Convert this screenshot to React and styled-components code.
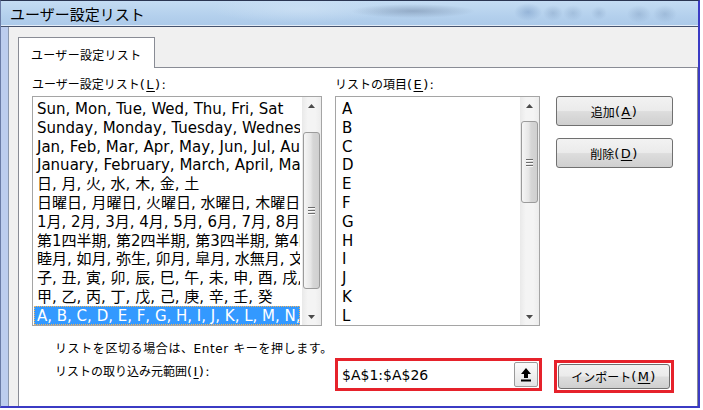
import React from 'react';
import styled, { createGlobalStyle } from 'styled-components';

const Global = createGlobalStyle`
  html, body { margin: 0; padding: 0; background: #fff; }
  body { width: 703px; height: 410px; overflow: hidden; }
`;

const UI = `"DejaVu Sans", "Noto Sans CJK JP", sans-serif`;

const Window = styled.div`
  width: 700px;
  height: 408px;
  box-sizing: border-box;
  border-top: 1px solid #2a3552;
  border-left: 1px solid #6a7ca6;
  border-right: 2px solid #3b3bc4;
  border-bottom: 2px solid #3b3bc4;
  background: #bccdee;
  display: flex;
  flex-direction: column;
  font-family: ${UI};
  color: #000;
`;

const TitleBar = styled.div`
  height: 26px;
  border-bottom: 1px solid #46536e;
  box-shadow: inset 0 -1px 0 #e2ecf8;
  display: flex;
  align-items: center;
  padding: 0 0 1px 9px;
  box-sizing: border-box;
  font-family: "Noto Sans CJK JP", sans-serif;
  font-size: 15px;
  background:
    radial-gradient(ellipse 62px 7px at 412px 10px, rgba(95,115,145,0.42), transparent 100%),
    radial-gradient(ellipse 14px 9px at 527px 11px, rgba(70,110,165,0.30), transparent 100%),
    radial-gradient(ellipse 10px 8px at 552px 12px, rgba(90,120,160,0.25), transparent 100%),
    radial-gradient(ellipse 10px 8px at 572px 12px, rgba(90,120,160,0.22), transparent 100%),
    radial-gradient(ellipse 8px 7px at 598px 12px, rgba(90,120,160,0.22), transparent 100%),
    radial-gradient(ellipse 12px 9px at 638px 13px, rgba(90,120,160,0.25), transparent 100%),
    radial-gradient(ellipse 12px 9px at 664px 13px, rgba(90,120,160,0.25), transparent 100%),
    radial-gradient(ellipse 90px 14px at 300px 8px, rgba(210,228,246,0.6), transparent 100%),
    linear-gradient(#c4dcf3, #b5d1ed 55%, #abc9e9);
`;

const Body = styled.div`
  flex: 1;
  margin-left: 7px;
  border-left: 1px solid #8a97ad;
  background: #f0f0f0;
  padding: 10px 0 0 9px;
  display: flex;
  flex-direction: column;
  min-height: 0;
`;

const TabStrip = styled.div`
  display: flex;
`;

const Tab = styled.div`
  position: relative;
  z-index: 1;
  width: 137px;
  height: 31px;
  box-sizing: border-box;
  border: 1px solid #898c95;
  border-bottom: none;
  background: #fff;
  margin-bottom: -1px;
  display: flex;
  align-items: center;
  padding: 3px 0 0 12px;
  font-size: 12px;
  letter-spacing: 0.3px;
`;

const Panel = styled.div`
  flex: 1;
  background: #fff;
  border: 1px solid #898c95;
  border-bottom: none;
  padding: 9px 0 0 13px;
  min-height: 0;
`;

const TopGrid = styled.div`
  display: grid;
  grid-template-columns: 290px 205px 117px;
  grid-template-rows: 16px 230px;
  column-gap: 13px;
  row-gap: 3px;
`;

const Label = styled.div`
  font-size: 12px;
  line-height: 16px;
  white-space: nowrap;
  padding-left: ${p => p.$indent || 0}px;
  margin-top: ${p => p.$top || 0}px;
`;

const Mn = styled.span`
  font-size: 13px;
  letter-spacing: 1.4px;
`;

const Key = styled.span`
  text-decoration: underline;
  text-underline-offset: 2px;
`;

const ListBox = styled.div`
  height: 230px;
  box-sizing: border-box;
  border: 1px solid #a5a5a5;
  background: #fff;
  display: flex;
  overflow: hidden;
`;

const Items = styled.div`
  flex: 1;
  min-width: 0;
  padding: 2px 2px 0 1px;
  overflow: hidden;
`;

const Item = styled.div`
  height: 18.8px;
  box-sizing: border-box;
  padding-top: 3px;
  line-height: 15.8px;
  font-size: 15px;
  padding-left: ${p => p.$pad}px;
  white-space: nowrap;
  overflow: hidden;
  background: ${p => (p.$selected ? '#3399ff' : 'transparent')};
  color: ${p => (p.$selected ? '#fff' : '#000')};
  outline: ${p => (p.$selected ? '1px dotted #f3b35a' : 'none')};
  outline-offset: -1px;
`;

const ScrollBar = styled.div`
  width: 19px;
  flex: none;
  background: linear-gradient(to right, #e9e9e9, #f4f4f4 30%, #f4f4f4 70%, #ececec);
  display: flex;
  flex-direction: column;
`;

const Arrow = styled.div`
  height: 17px;
  flex: none;
  display: flex;
  align-items: center;
  justify-content: center;
`;

const Track = styled.div`
  flex: 1;
  padding: 0 1px;
`;

const Thumb = styled.div`
  margin-top: ${p => p.$top}px;
  height: ${p => p.$h}px;
  box-sizing: border-box;
  border: 1px solid #9b9b9b;
  border-radius: 3px;
  background: linear-gradient(to right, #f6f6f6, #e6e6e6 45%, #d6d6d6 60%, #cfcfcf);
  display: flex;
  flex-direction: column;
  align-items: center;
  justify-content: center;
  gap: 2px;
`;

const Grip = styled.div`
  width: 7px;
  height: 1px;
  background: #6d6d6d;
  box-shadow: 0 1px 0 #fafafa;
`;

const ButtonCol = styled.div`
  margin-left: 3px;
  display: flex;
  flex-direction: column;
  gap: 12px;
`;

const Button = styled.button`
  width: ${p => p.$w || 117}px;
  height: ${p => p.$h || 30}px;
  box-sizing: border-box;
  border: 1px solid #707070;
  border-radius: 3px;
  background: linear-gradient(#f2f2f2, #ebebeb 48%, #dddddd 52%, #cfcfcf);
  font-family: ${UI};
  font-size: 12px;
  color: #000;
  padding: 0;
  display: flex;
  align-items: center;
  justify-content: center;
`;

const Info = styled.div`
  margin-top: 15px;
  padding-left: 23px;
  font-size: 12px;
  letter-spacing: 0.6px;
  line-height: 16px;
  white-space: nowrap;
`;

const RangeRow = styled.div`
  margin-top: 1px;
  display: grid;
  grid-template-columns: 290px 205px 117px;
  column-gap: 13px;
  align-items: start;
`;

const RedInput = styled.div`
  width: 207px;
  height: 33px;
  box-sizing: border-box;
  border: 3px solid #e6222b;
  background: #fff;
  display: flex;
  align-items: center;
  padding: 0 1px 0 4px;
`;

const RangeText = styled.div`
  flex: 1;
  font-size: 14px;
  white-space: nowrap;
`;

const Collapse = styled.div`
  width: 24px;
  height: 25px;
  box-sizing: border-box;
  border: 1px solid #9a9a9a;
  border-radius: 2px;
  background: linear-gradient(#fcfcfc, #f0f0f0 50%, #e4e4e4);
  display: flex;
  align-items: center;
  justify-content: center;
`;

const RedButtonBox = styled.div`
  margin-left: 1px;
  margin-top: 2px;
  width: 120px;
  height: 33px;
  box-sizing: border-box;
  border: 3px solid #e6222b;
  padding: 1px;
  background: #fff;
`;

const UpTri = () => (
  <svg width="7" height="4" viewBox="0 0 7 4"><polygon points="0,4 3.5,0 7,4" fill="#4a4a4a" /></svg>
);
const DownTri = () => (
  <svg width="7" height="4" viewBox="0 0 7 4"><polygon points="0,0 3.5,4 7,0" fill="#4a4a4a" /></svg>
);

const Scroll = ({ top, h }) => (
  <ScrollBar>
    <Arrow><UpTri /></Arrow>
    <Track>
      <Thumb $top={top} $h={h}>
        <Grip /><Grip /><Grip />
      </Thumb>
    </Track>
    <Arrow><DownTri /></Arrow>
  </ScrollBar>
);

const userLists = [
  'Sun, Mon, Tue, Wed, Thu, Fri, Sat',
  'Sunday, Monday, Tuesday, Wednesday, Thursday, Friday, Saturday',
  'Jan, Feb, Mar, Apr, May, Jun, Jul, Aug, Sep, Oct, Nov, Dec',
  'January, February, March, April, May, June, July, August',
  '日, 月, 火, 水, 木, 金, 土',
  '日曜日, 月曜日, 火曜日, 水曜日, 木曜日, 金曜日, 土曜日',
  '1月, 2月, 3月, 4月, 5月, 6月, 7月, 8月, 9月, 10月',
  '第1四半期, 第2四半期, 第3四半期, 第4四半期',
  '睦月, 如月, 弥生, 卯月, 皐月, 水無月, 文月, 葉月',
  '子, 丑, 寅, 卯, 辰, 巳, 午, 未, 申, 酉, 戌, 亥',
  '甲, 乙, 丙, 丁, 戊, 己, 庚, 辛, 壬, 癸',
  'A, B, C, D, E, F, G, H, I, J, K, L, M, N, O, P',
];

const entries = ['A', 'B', 'C', 'D', 'E', 'F', 'G', 'H', 'I', 'J', 'K', 'L'];

export default function App() {
  return (
    <>
      <Global />
      <Window>
        <TitleBar>ユーザー設定リスト</TitleBar>
        <Body>
          <TabStrip>
            <Tab>ユーザー設定リスト</Tab>
          </TabStrip>
          <Panel>
            <TopGrid>
              <Label>ユーザー設定リスト<Mn>(<Key>L</Key>):</Mn></Label>
              <Label>リストの項目<Mn>(<Key>E</Key>):</Mn></Label>
              <div />
              <ListBox>
                <Items>
                  {userLists.map((t, i) => (
                    <Item key={i} $pad={3} $selected={i === userLists.length - 1}>{t}</Item>
                  ))}
                </Items>
                <Scroll top={18} h={157} />
              </ListBox>
              <ListBox>
                <Items>
                  {entries.map(t => (
                    <Item key={t} $pad={5}>{t}</Item>
                  ))}
                </Items>
                <Scroll top={7} h={82} />
              </ListBox>
              <ButtonCol>
                <Button>追加<Mn>(<Key>A</Key>)</Mn></Button>
                <Button>削除<Mn>(<Key>D</Key>)</Mn></Button>
              </ButtonCol>
            </TopGrid>
            <Info>リストを区切る場合は、Enter キーを押します。</Info>
            <RangeRow>
              <Label $indent={23} $top={6}>リストの取り込み元範囲<Mn>(<Key>I</Key>):</Mn></Label>
              <RedInput>
                <RangeText>$A$1:$A$26</RangeText>
                <Collapse>
                  <svg width="12" height="15" viewBox="0 0 12 15">
                    <polygon points="6,1 11,7 8,7 8,11 4,11 4,7 1,7" fill="#000" />
                    <rect x="1" y="12.5" width="10" height="2" fill="#000" />
                  </svg>
                </Collapse>
              </RedInput>
              <RedButtonBox>
                <Button $w={112} $h={25}>インポート<Mn>(<Key>M</Key>)</Mn></Button>
              </RedButtonBox>
            </RangeRow>
          </Panel>
        </Body>
      </Window>
    </>
  );
}
